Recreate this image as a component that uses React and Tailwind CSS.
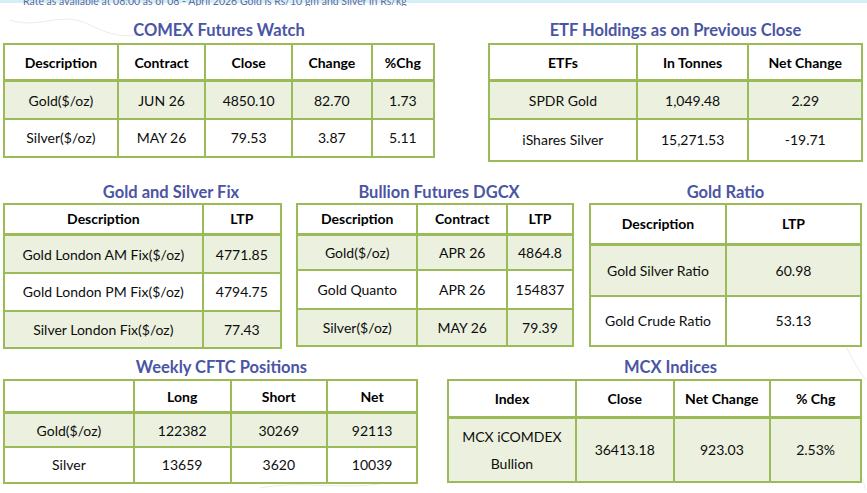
import React from "react";

const FONT = { fontFamily: "Lato, 'Open Sans', 'Noto Sans', sans-serif" };

function Title({ children, className }) {
  return (
    <div className={"flex items-end justify-center " + className}>
      <span className="text-[16.5px] leading-[20px] font-bold text-[#4a55a3] whitespace-nowrap">{children}</span>
    </div>
  );
}

function Grid({ className, header, rows, shade }) {
  return (
    <div className={"grid bg-[#9bbb59] p-[2px] gap-[2px] " + className}>
      {header.map((h, i) => (
        <div
          key={"h" + i}
          className="bg-white border-b border-[#9bbb59] flex items-center justify-center text-center font-bold text-[14px] text-black whitespace-nowrap"
        >
          {h}
        </div>
      ))}
      {rows.map((r, ri) =>
        r.map((c, ci) => (
          <div
            key={ri + "-" + ci}
            className={
              "flex items-center justify-center text-center text-[14px] text-[#0d0d0d] whitespace-nowrap " +
              (shade[ri] ? "bg-[#ebf1de]" : "bg-white")
            }
          >
            {c}
          </div>
        ))
      )}
    </div>
  );
}

function Marble() {
  return (
    <svg className="absolute inset-0" width="867" height="493" viewBox="0 0 867 493" fill="none">
      <g stroke="#ececec" strokeWidth="1">
        <path d="M10 20 C 40 30, 60 10, 90 25 S 140 40, 170 20" />
        <path d="M560 60 C 590 80, 620 70, 650 95 S 700 120, 740 100" />
        <path d="M820 300 C 840 330, 850 360, 866 380" />
        <path d="M840 420 C 850 450, 860 470, 866 490" />
        <path d="M260 488 C 300 480, 340 490, 380 484" />
      </g>
    </svg>
  );
}

export default function App() {
  return (
    <div className="relative w-[867px] h-[493px] overflow-hidden bg-white" style={FONT}>
      <Marble />
      <div className="relative flex flex-col">
        {/* clipped top strip */}
        <div className="h-[6px] overflow-hidden bg-[linear-gradient(to_bottom,#d6eff5_3px,transparent_3px)] flex items-end pl-[23px]">
          <span className="text-[10.5px] leading-[10px] text-[#5e6aa6] whitespace-nowrap">
            Rate as available at 08:00 as of 08 - April 2026 Gold is Rs/10 gm and Silver in Rs/kg
          </span>
        </div>

        {/* Row 1 */}
        <div className="flex items-start">
          <div className="ml-[3px] flex flex-col">
            <Title className="h-[37px] pb-[3px]">COMEX Futures Watch</Title>
            <Grid
              className="w-[432px] h-[115px] grid-cols-[115fr_88fr_87fr_80fr_62fr] grid-rows-[38fr_38fr_39fr]"
              header={["Description", "Contract", "Close", "Change", "%Chg"]}
              rows={[
                ["Gold($/oz)", "JUN 26", "4850.10", "82.70", "1.73"],
                ["Silver($/oz)", "MAY 26", "79.53", "3.87", "5.11"],
              ]}
              shade={[true, false]}
            />
          </div>
          <div className="ml-[53px] flex flex-col">
            <Title className="h-[37px] pb-[3px]">ETF Holdings as on Previous Close</Title>
            <Grid
              className="w-[375px] h-[119px] grid-cols-[149fr_112fr_114fr] grid-rows-[38fr_38fr_43fr]"
              header={["ETFs", "In Tonnes", "Net Change"]}
              rows={[
                ["SPDR Gold", "1,049.48", "2.29"],
                ["iShares Silver", "15,271.53", "-19.71"],
              ]}
              shade={[true, false]}
            />
          </div>
        </div>

        {/* Row 2 */}
        <div className="flex items-start">
          <div className="ml-[3px] flex flex-col">
            <Title className="h-[41px] pb-[1px] pl-[57px]">Gold and Silver Fix</Title>
            <Grid
              className="w-[279px] h-[146px] grid-cols-[201fr_78fr] grid-rows-[31fr_39fr_38fr_38fr]"
              header={["Description", "LTP"]}
              rows={[
                ["Gold London AM Fix($/oz)", "4771.85"],
                ["Gold London PM Fix($/oz)", "4794.75"],
                ["Silver London Fix($/oz)", "77.43"],
              ]}
              shade={[true, false, true]}
            />
          </div>
          <div className="ml-[14px] flex flex-col">
            <Title className="h-[41px] pb-[1px] pl-[8px]">Bullion Futures DGCX</Title>
            <Grid
              className="w-[278px] h-[144px] grid-cols-[122fr_90fr_66fr] grid-rows-[31fr_36fr_39fr_38fr]"
              header={["Description", "Contract", "LTP"]}
              rows={[
                ["Gold($/oz)", "APR 26", "4864.8"],
                ["Gold Quanto", "APR 26", "154837"],
                ["Silver($/oz)", "MAY 26", "79.39"],
              ]}
              shade={[true, false, true]}
            />
          </div>
          <div className="ml-[15px] flex flex-col">
            <Title className="h-[41px] pb-[1px]">Gold Ratio</Title>
            <Grid
              className="w-[273px] h-[144px] grid-cols-[137fr_136fr] grid-rows-[41fr_52fr_51fr]"
              header={["Description", "LTP"]}
              rows={[
                ["Gold Silver Ratio", "60.98"],
                ["Gold Crude Ratio", "53.13"],
              ]}
              shade={[true, false]}
            />
          </div>
        </div>

        {/* Row 3 */}
        <div className="flex items-start">
          <div className="ml-[3px] flex flex-col">
            <Title className="h-[30px] pb-[2px] pl-[22px]">Weekly CFTC Positions</Title>
            <Grid
              className="w-[415px] h-[105px] grid-cols-[131fr_97fr_97fr_90fr] grid-rows-[34fr_34fr_37fr]"
              header={["", "Long", "Short", "Net"]}
              rows={[
                ["Gold($/oz)", "122382", "30269", "92113"],
                ["Silver", "13659", "3620", "10039"],
              ]}
              shade={[true, false]}
            />
          </div>
          <div className="ml-[29px] flex flex-col">
            <Title className="h-[30px] pb-[2px] pl-[32px]">MCX Indices</Title>
            <Grid
              className="w-[415px] h-[104px] grid-cols-[129fr_98fr_97fr_91fr] grid-rows-[38fr_66fr]"
              header={["Index", "Close", "Net Change", "% Chg"]}
              rows={[
                [
                  <span key="m" className="leading-[27px] whitespace-normal">
                    MCX iCOMDEX
                    <br />
                    Bullion
                  </span>,
                  "36413.18",
                  "923.03",
                  "2.53%",
                ],
              ]}
              shade={[true]}
            />
          </div>
        </div>
      </div>
    </div>
  );
}
